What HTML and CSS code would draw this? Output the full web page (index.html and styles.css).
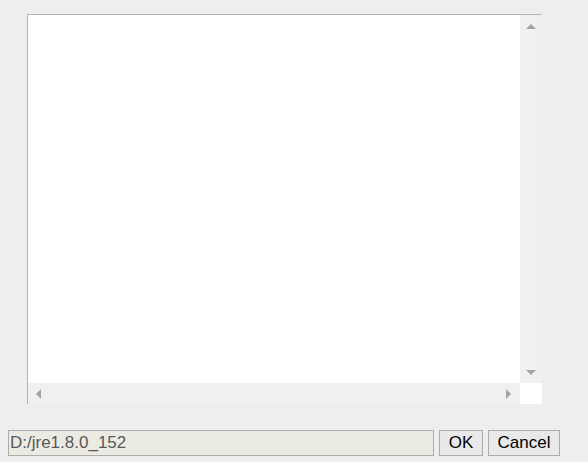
FILE: index.html
```html
<!DOCTYPE html>
<html>
<head>
<meta charset="utf-8">
<link rel="stylesheet" href="styles.css">
</head>
<body>
<div class="page">
  <div class="box">
    <div class="content"></div>
    <div class="vscroll">
      <span class="arrow up"></span>
      <span class="arrow down"></span>
    </div>
    <div class="hscroll">
      <span class="arrow left"></span>
      <span class="arrow right"></span>
    </div>
    <div class="corner"></div>
  </div>
  <div class="bar">
    <div class="field">D:/jre1.8.0_152</div>
    <button class="btn ok">OK</button>
    <button class="btn cancel">Cancel</button>
  </div>
</div>
</body>
</html>
```

FILE: styles.css
```css
html, body {
  margin: 0;
  padding: 0;
  background: #eeeeee;
  width: 588px;
  height: 462px;
  overflow: hidden;
}
.page {
  display: flex;
  flex-direction: column;
  padding: 14px 0 0 0;
}
.box {
  margin-left: 27px;
  width: 514px;
  height: 389px;
  display: grid;
  grid-template-columns: 1fr 22px;
  grid-template-rows: 1fr 21px;
  border-top: 1px solid #b4b4b4;
  border-left: 1px solid #b4b4b4;
  background: #ffffff;
}
.content { background: #ffffff; }
.vscroll {
  background: #f0f0f0;
  display: flex;
  flex-direction: column;
  justify-content: space-between;
  align-items: center;
  padding: 9px 0 8px 0;
}
.hscroll {
  background: #f0f0f0;
  display: flex;
  justify-content: space-between;
  align-items: center;
  padding: 0 9px 0 8px;
}
.corner { background: #ffffff; }
.arrow {
  width: 0;
  height: 0;
  display: block;
}
.up {
  border-left: 5px solid transparent;
  border-right: 5px solid transparent;
  border-bottom: 5px solid #a3a3a3;
}
.down {
  border-left: 5px solid transparent;
  border-right: 5px solid transparent;
  border-top: 5px solid #a3a3a3;
}
.left {
  border-top: 5px solid transparent;
  border-bottom: 5px solid transparent;
  border-right: 5px solid #a3a3a3;
}
.right {
  border-top: 5px solid transparent;
  border-bottom: 5px solid transparent;
  border-left: 5px solid #a3a3a3;
}
.bar {
  display: flex;
  gap: 5px;
  margin-top: 26px;
  margin-left: 8px;
  height: 26px;
}
.field {
  width: 423px;
  height: 24px;
  border: 1px solid #adadad;
  background: #ebebe4;
  color: #585858;
  font-family: "Liberation Sans", Arial, sans-serif;
  font-size: 17px;
  line-height: 24px;
  padding: 0 0 0 1px;
  box-sizing: content-box;
}
.btn {
  height: 26px;
  margin: 0;
  padding: 0;
  border: 1px solid #adadad;
  background: #e9e9e9;
  color: #000000;
  font-family: "Liberation Sans", Arial, sans-serif;
  font-size: 17px;
  line-height: 24px;
}
.ok { width: 44px; }
.cancel { width: 72px; }
```
